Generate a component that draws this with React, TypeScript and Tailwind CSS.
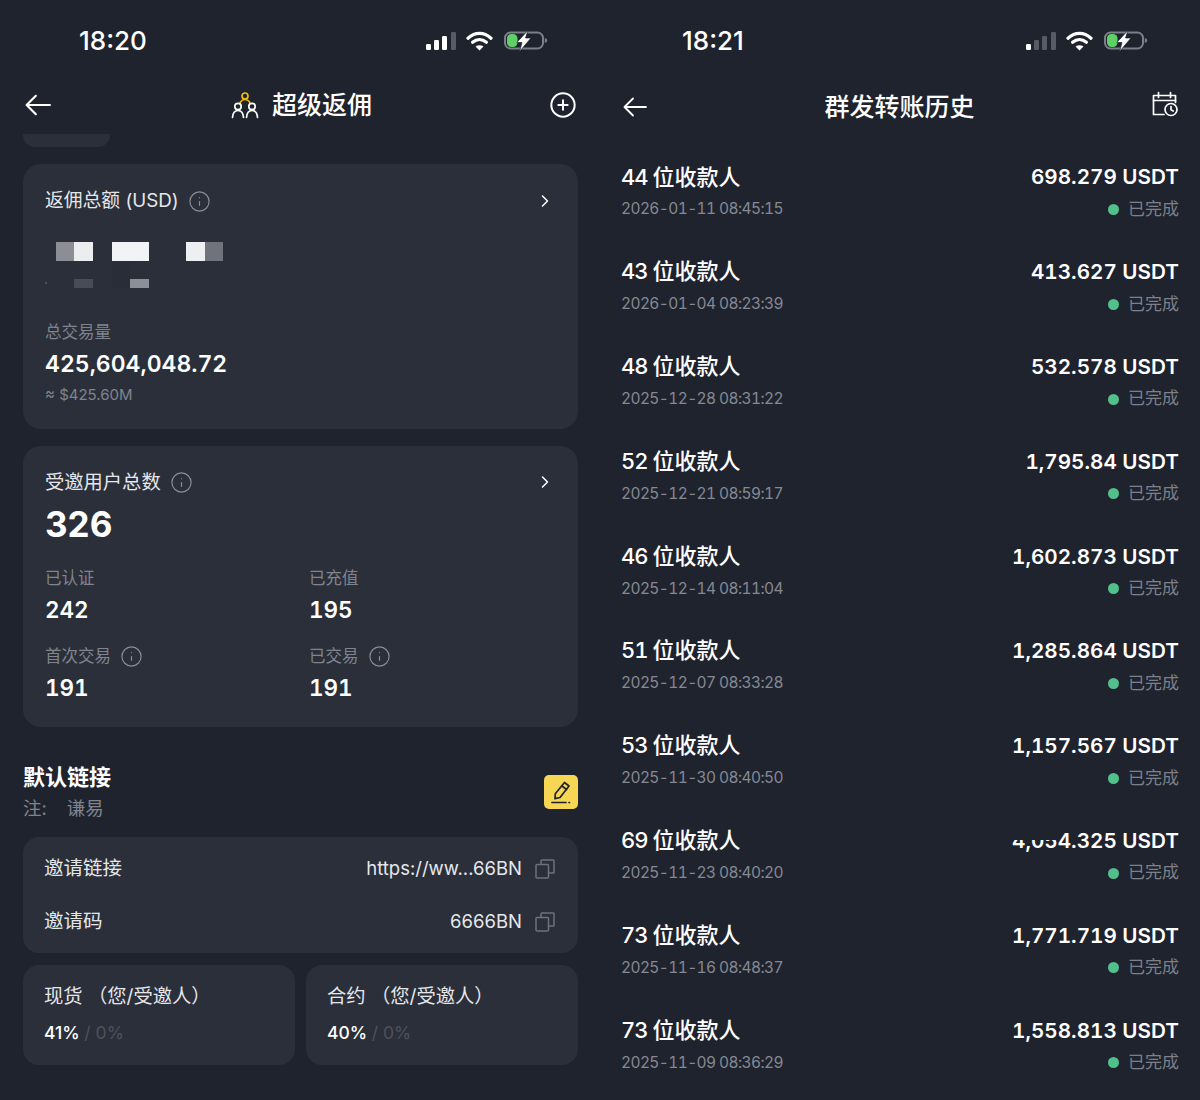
import { ChevronRight, CirclePlus, Info } from 'lucide-react'

const TRANSFERS = [
  { count: 44, date: '2026-01-11 08:45:15', amount: '698.279' },
  { count: 43, date: '2026-01-04 08:23:39', amount: '413.627' },
  { count: 48, date: '2025-12-28 08:31:22', amount: '532.578' },
  { count: 52, date: '2025-12-21 08:59:17', amount: '1,795.84' },
  { count: 46, date: '2025-12-14 08:11:04', amount: '1,602.873' },
  { count: 51, date: '2025-12-07 08:33:28', amount: '1,285.864' },
  { count: 53, date: '2025-11-30 08:40:50', amount: '1,157.567' },
  { count: 69, date: '2025-11-23 08:40:20', amount: '4,054.325', masked: true },
  { count: 73, date: '2025-11-16 08:48:37', amount: '1,771.719' },
  { count: 73, date: '2025-11-09 08:36:29', amount: '1,558.813' },
]

function StatusIcons({ activeBars }: { activeBars: number }) {
  const bars = [
    { x: 1, y: 12, h: 6 },
    { x: 9, y: 8, h: 10 },
    { x: 17, y: 4, h: 14 },
    { x: 26, y: 0, h: 18 },
  ]
  return (
    <div className="flex items-center">
      <svg width="31" height="18" viewBox="0 0 31 18">
        {bars.map((b, i) => (
          <rect key={b.x} x={b.x} y={b.y} width="5" height={b.h} rx="1.2" fill={i < activeBars ? '#ffffff' : '#565b66'} />
        ))}
      </svg>
      <svg className="ml-[10px]" width="27" height="20" viewBox="0 0 27 20" fill="none">
        <path d="M2 7.2C9 .8 18 .8 25 7.2" stroke="#fff" strokeWidth="3.2" strokeLinecap="round" />
        <path d="M6.6 11.2c4.2-3.6 9.6-3.6 13.8 0" stroke="#fff" strokeWidth="3.2" strokeLinecap="round" />
        <path d="M13.5 19.6l-4-4.2c2.400-1.700 5.600-1.700 8 0z" fill="#fff" />
      </svg>
      <svg className="ml-[11px]" width="44" height="22" viewBox="0 0 44 22" fill="none">
        <rect x="1" y="2.500" width="38" height="16" rx="5.500" stroke="#7b7f88" strokeWidth="2" />
        <rect x="3" y="4" width="10.500" height="13" rx="4.500" fill="#5fd067" />
        <path d="M40.800 8v5c1.600-.4 2.400-1.300 2.400-2.500S42.400 8.400 40.800 8z" fill="#7b7f88" />
        <path d="M24 0.300L12.800 12.500h5.200L15.500 21.500 27 8h-5.500z" fill="#fff" stroke="#1f232e" strokeWidth="0.700" />
      </svg>
    </div>
  )
}

function BackArrow({ size, stroke }: { size: number; stroke: number }) {
  return (
    <svg width={size} height={size} viewBox="0 0 24 24" fill="none" stroke="#fff" strokeWidth={stroke} strokeLinecap="round" strokeLinejoin="round">
      <path d="M23 12H1.500M10 3.500L1.500 12l8.500 8.500" />
    </svg>
  )
}

function PeopleIcon() {
  return (
    <svg width="28" height="28" viewBox="0 0 28 28" fill="none" strokeWidth="1.700" strokeLinecap="round">
      <circle cx="14" cy="5" r="3" stroke="#f0b90b" />
      <path d="M8.800 12.500C9.800 10 11.500 8.500 14 8.500s4.200 1.500 5.200 4" stroke="#f0b90b" />
      <circle cx="7" cy="15.500" r="3.200" stroke="#fff" />
      <circle cx="21" cy="15.500" r="3.200" stroke="#fff" />
      <path d="M1.500 26.500c.3-4 2.400-7 5.500-7s5.200 3 5.500 7M15.500 26.500c.3-4 2.400-7 5.500-7s5.200 3 5.500 7" stroke="#fff" />
    </svg>
  )
}

function CopyIcon() {
  return (
    <svg width="20" height="20" viewBox="0 0 20 20" fill="none" stroke="#6d727c" strokeWidth="1.500" strokeLinejoin="round">
      <rect x="1" y="5.500" width="12.500" height="13.500" rx="1" />
      <path d="M6 5.500V1.800a.8.8 0 01.8-.8h11.400a.8.8 0 01.8.8v11.400a.8.8 0 01-.8.8h-4.700" />
    </svg>
  )
}

function EditIcon() {
  return (
    <svg width="22" height="24" viewBox="0 0 22 24" fill="none" stroke="#1f232e" strokeWidth="1.700" strokeLinecap="round" strokeLinejoin="round">
      <path d="M14.500 2.500l4.500 3.500-9 11.500-5 1.200.3-5z" />
      <path d="M12 6l4.500 3.500" />
      <path d="M2 22.500h14M19 22.500h.5" />
    </svg>
  )
}

function CalendarClockIcon() {
  return (
    <svg width="26" height="26" viewBox="0 0 26 26" fill="none" stroke="#fff" strokeWidth="1.700" strokeLinecap="round" strokeLinejoin="round">
      <path d="M12 23.500H1.500V4.500h22v7" />
      <path d="M1.500 9.500h22" />
      <path d="M6.500 1.500v5M18.500 1.500v5" />
      <circle cx="19" cy="18.500" r="6" />
      <path d="M19 15.500v3.300l2.200 1.200" />
    </svg>
  )
}

// the blurred-out balance in the reference
function Mosaic() {
  return (
    <svg width="200" height="50" viewBox="0 0 200 50">
      <rect x="11" y="0" width="19" height="19" fill="#8d8e95" />
      <rect x="29" y="0" width="19" height="19" fill="#ecedef" />
      <rect x="67" y="0" width="37" height="19" fill="#f2f3f6" />
      <rect x="141" y="0" width="19" height="19" fill="#eeeff1" />
      <rect x="160" y="0" width="18" height="19" fill="#71737c" />
      <rect x="29" y="37" width="19" height="9" fill="#474c57" />
      <rect x="67" y="20" width="18" height="26" fill="#282d38" />
      <rect x="85" y="37" width="19" height="9" fill="#8b9098" />
      <rect x="0" y="40" width="2" height="2" fill="#4a4f59" />
    </svg>
  )
}

function InfoDot({ className }: { className: string }) {
  return <Info className={className} size={23} strokeWidth={1.200} color="#8a8e97" />
}

function Stat({ label, value, info }: { label: string; value: string; info?: boolean }) {
  return (
    <div>
      <div className="flex h-[24px] items-center gap-[9px] text-[16.500px] text-[#80848d]">
        {label}
        {info && <InfoDot className="" />}
      </div>
      <div className="mt-[4px] h-[32px] text-[22.500px] leading-[32px] font-semibold tabular-nums text-white">{value}</div>
    </div>
  )
}

function RateCard({ title, rate }: { title: string; rate: string }) {
  return (
    <div className="flex-1 h-[100px] rounded-[16px] bg-[#2a2f3a] pl-[21px] pt-[17px]">
      <div className="h-[28px] text-[19.300px] leading-[28px] text-[#e6e7ea]">{title}</div>
      <div className="mt-[10px] text-[17.500px] leading-[26px] font-medium text-white">
        {rate} <span className="font-normal text-[#4d525d]">/ 0%</span>
      </div>
    </div>
  )
}

export default function App() {
  return (
    <div className="flex h-[1100px] w-[1200px] overflow-hidden bg-[#1f232e] font-['Inter','Noto_Sans_CJK_SC',sans-serif] text-white">
      {/* Left phone */}
      <div className="w-[600px] pl-[23px] pr-[22px]">
        <div className="flex h-[82px] items-center justify-between pl-[56px] pr-[30px]">
          <span className="-mt-[2px] text-[26px] font-medium">18:20</span>
          <StatusIcons activeBars={3} />
        </div>
        <div className="relative flex h-[46px] items-center justify-between pl-[2px] pr-[2px]">
          <BackArrow size={26} stroke={2} />
          <div className="ml-[3px] flex items-center gap-[13px]">
            <PeopleIcon />
            <span className="mt-[2px] text-[25px] font-medium">超级返佣</span>
          </div>
          <CirclePlus size={28} strokeWidth={1.700} className="-mr-[1px]" />
        </div>
        <div className="mt-[6px] h-[13px] w-[87px] rounded-b-[12px] bg-[#2a2f3a]" />

        <div className="mt-[17px] h-[265px] rounded-[18px] bg-[#2a2f3a] pl-[22px] pr-[24px] pt-[22px]">
          <div className="flex h-[30px] items-center justify-between">
            <div className="flex items-center gap-[9px] text-[18.800px] text-[#e6e7ea]">
              返佣总额 (USD)
              <InfoDot className="mt-[1px]" />
            </div>
            <ChevronRight size={20} strokeWidth={1.800} className="-mr-[1px]" />
          </div>
          <div className="mt-[26px] h-[52px]">
            <Mosaic />
          </div>
          <div className="mt-[26px] h-[24px] text-[16.500px] leading-[24px] text-[#80848d]">总交易量</div>
          <div className="mt-[4px] h-[32px] text-[23px] leading-[32px] font-semibold tabular-nums">425,604,048.72</div>
          <div className="mt-[3px] text-[15px] leading-[24px] text-[#80848d]">≈ $425.60M</div>
        </div>

        <div className="mt-[17px] h-[281px] rounded-[18px] bg-[#2a2f3a] pl-[22px] pr-[24px] pt-[21px]">
          <div className="flex h-[30px] items-center justify-between">
            <div className="flex items-center gap-[9px] text-[19.300px] text-[#e6e7ea]">
              受邀用户总数
              <InfoDot className="mt-[1px]" />
            </div>
            <ChevronRight size={20} strokeWidth={1.800} className="-mr-[1px]" />
          </div>
          <div className="mt-[5px] h-[44px] text-[35px] leading-[44px] font-bold">326</div>
          <div className="mt-[20px] grid grid-cols-[264px_1fr] gap-y-[18px]">
            <Stat label="已认证" value="242" />
            <Stat label="已充值" value="195" />
            <Stat label="首次交易" value="191" info />
            <Stat label="已交易" value="191" info />
          </div>
        </div>

        <div className="mt-[33px] flex h-[64px] items-center justify-between">
          <div>
            <div className="h-[32px] text-[22px] leading-[32px] font-semibold">默认链接</div>
            <div className="h-[30px] text-[18.500px] leading-[30px] text-[#80848d]">
              注<span className="mr-[20px]">:</span>谦易
            </div>
          </div>
          <div className="flex h-[34px] w-[34px] items-center justify-center rounded-[5px] bg-[#f6d652]">
            <EditIcon />
          </div>
        </div>

        <div className="mt-[13px] flex h-[116px] flex-col justify-center rounded-[16px] bg-[#2a2f3a] pl-[21px] pr-[23px]">
          <div className="flex h-[53px] items-center justify-between">
            <span className="text-[19.500px] text-[#e6e7ea]">邀请链接</span>
            <div className="flex items-center gap-[13px]">
              <span className="text-[18.500px] text-[#e6e7ea]">https://ww...66BN</span>
              <CopyIcon />
            </div>
          </div>
          <div className="flex h-[53px] items-center justify-between">
            <span className="text-[19.500px] text-[#e6e7ea]">邀请码</span>
            <div className="flex items-center gap-[13px]">
              <span className="text-[18.500px] text-[#e6e7ea]">6666BN</span>
              <CopyIcon />
            </div>
          </div>
        </div>

        <div className="mt-[12px] flex gap-[11px]">
          <RateCard title="现货 （您/受邀人）" rate="41%" />
          <RateCard title="合约 （您/受邀人）" rate="40%" />
        </div>
      </div>

      {/* Right phone */}
      <div className="w-[600px] pl-[21px] pr-[21px]">
        <div className="flex h-[82px] items-center justify-between pl-[61px] pr-[31px]">
          <span className="-mt-[2px] text-[26px] font-medium">18:21</span>
          <StatusIcons activeBars={1} />
        </div>
        <div className="relative flex h-[50px] items-center justify-between pl-[2px]">
          <BackArrow size={24} stroke={1.800} />
          <span className="mt-[2px] text-[25px] font-medium">群发转账历史</span>
          <div className="-mt-[6px] mr-[1px]">
            <CalendarClockIcon />
          </div>
        </div>
        <div className="pt-[29px]">
          {TRANSFERS.map(t => (
            <div key={t.date} className="h-[94.800px]">
              <div className="flex h-[32px] items-center justify-between">
                <span className="text-[22px] font-medium tabular-nums">
                  <span className="tracking-[-1px]">{t.count} </span>位收款人
                </span>
                <span className="relative text-[20.700px] font-semibold tabular-nums">
                  {t.amount} USDT
                  {t.masked && <span className="absolute left-[-3px] top-0 h-[15px] w-[50px] bg-[#1f232e]" />}
                </span>
              </div>
              <div className="flex h-[32px] items-center justify-between">
                <span className="text-[15.500px] tracking-[-0.6px] tabular-nums text-[#858993]">{t.date}</span>
                <div className="mt-[1px] flex items-center gap-[9px]">
                  <span className="h-[11px] w-[11px] rounded-full bg-[#52c08a]" />
                  <span className="text-[17px] text-[#7c808a]">已完成</span>
                </div>
              </div>
            </div>
          ))}
        </div>
      </div>
    </div>
  )
}
